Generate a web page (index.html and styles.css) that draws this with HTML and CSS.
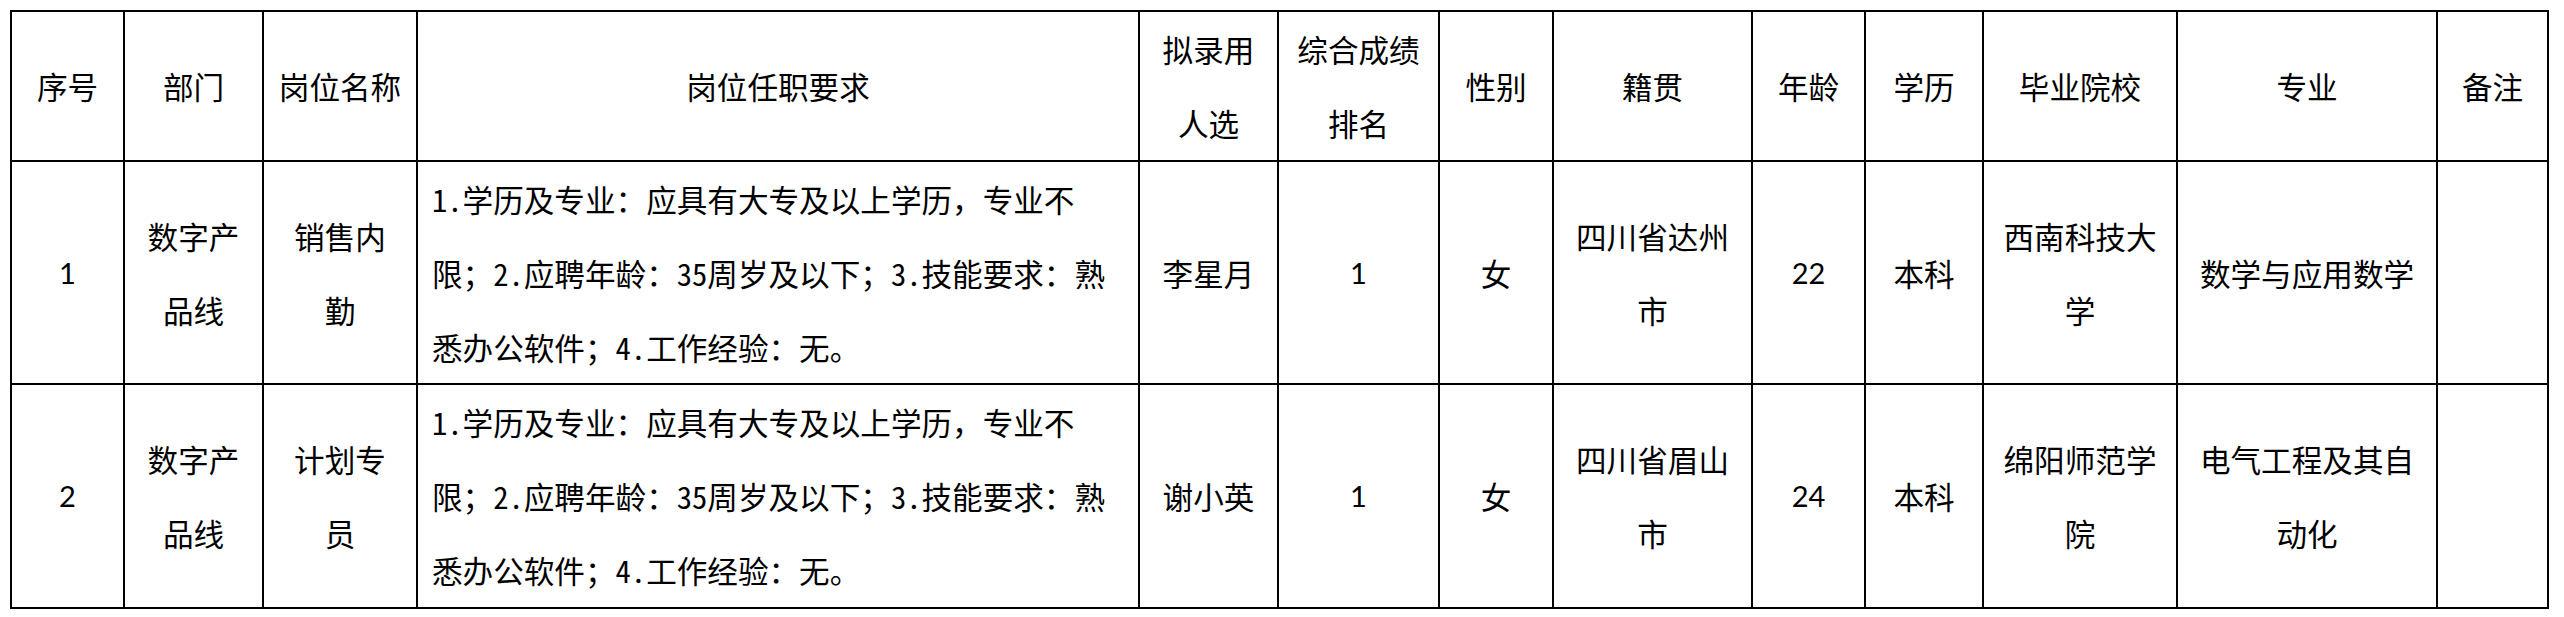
FILE: index.html
```html
<!DOCTYPE html>
<html lang="zh-CN">
<head>
<meta charset="utf-8">
<title>拟录用人员名单</title>
<link rel="stylesheet" href="styles.css">
</head>
<body>
<div class="sheet" role="table">
  <div class="cell head" role="columnheader">序号</div>
  <div class="cell head" role="columnheader">部门</div>
  <div class="cell head" role="columnheader">岗位名称</div>
  <div class="cell head" role="columnheader">岗位任职要求</div>
  <div class="cell head" role="columnheader">拟录用<br>人选</div>
  <div class="cell head" role="columnheader">综合成绩<br>排名</div>
  <div class="cell head" role="columnheader">性别</div>
  <div class="cell head" role="columnheader">籍贯</div>
  <div class="cell head" role="columnheader">年龄</div>
  <div class="cell head" role="columnheader">学历</div>
  <div class="cell head" role="columnheader">毕业院校</div>
  <div class="cell head" role="columnheader">专业</div>
  <div class="cell head" role="columnheader">备注</div>

  <div class="cell num" role="cell">1</div>
  <div class="cell" role="cell">数字产<br>品线</div>
  <div class="cell" role="cell">销售内<br>勤</div>
  <div class="cell req" role="cell">1.学历及专业：应具有大专及以上学历，专业不<br>限；2.应聘年龄：35周岁及以下；3.技能要求：熟<br>悉办公软件；4.工作经验：无。</div>
  <div class="cell" role="cell">李星月</div>
  <div class="cell num" role="cell">1</div>
  <div class="cell" role="cell">女</div>
  <div class="cell" role="cell">四川省达州<br>市</div>
  <div class="cell num" role="cell">22</div>
  <div class="cell" role="cell">本科</div>
  <div class="cell" role="cell">西南科技大<br>学</div>
  <div class="cell" role="cell">数学与应用数学</div>
  <div class="cell" role="cell"></div>

  <div class="cell num" role="cell">2</div>
  <div class="cell" role="cell">数字产<br>品线</div>
  <div class="cell" role="cell">计划专<br>员</div>
  <div class="cell req" role="cell">1.学历及专业：应具有大专及以上学历，专业不<br>限；2.应聘年龄：35周岁及以下；3.技能要求：熟<br>悉办公软件；4.工作经验：无。</div>
  <div class="cell" role="cell">谢小英</div>
  <div class="cell num" role="cell">1</div>
  <div class="cell" role="cell">女</div>
  <div class="cell" role="cell">四川省眉山<br>市</div>
  <div class="cell num" role="cell">24</div>
  <div class="cell" role="cell">本科</div>
  <div class="cell" role="cell">绵阳师范学<br>院</div>
  <div class="cell" role="cell">电气工程及其自<br>动化</div>
  <div class="cell" role="cell"></div>
</div>
</body>
</html>
```

FILE: styles.css
```css
html, body {
  margin: 0;
  padding: 0;
  background: #fff;
}

body {
  font-family: "Noto Sans CJK SC", "Noto Sans", sans-serif;
  color: #000;
}

.sheet {
  display: grid;
  grid-template-columns: 111px 137px 152px 720px 137px 159px 112px 197px 111px 116px 192px 258px 109px;
  grid-template-rows: 148px 221px 222px;
  gap: 2px;
  background: #000;
  border: 2px solid #000;
  width: max-content;
  margin: 10px 0 0 10px;
}

.cell {
  background: #fff;
  display: flex;
  flex-direction: column;
  align-items: center;
  justify-content: center;
  text-align: center;
  font-size: 30.6px;
  line-height: 74px;
  font-weight: 400;
  white-space: nowrap;
}

.num {
  font-family: Lato, "Open Sans", sans-serif;
  font-size: 29px;
}

.req {
  align-items: flex-start;
  text-align: left;
  padding-left: 14px;
  font-family: "Noto Sans Mono CJK SC", "Noto Sans CJK SC", monospace;
}
```
